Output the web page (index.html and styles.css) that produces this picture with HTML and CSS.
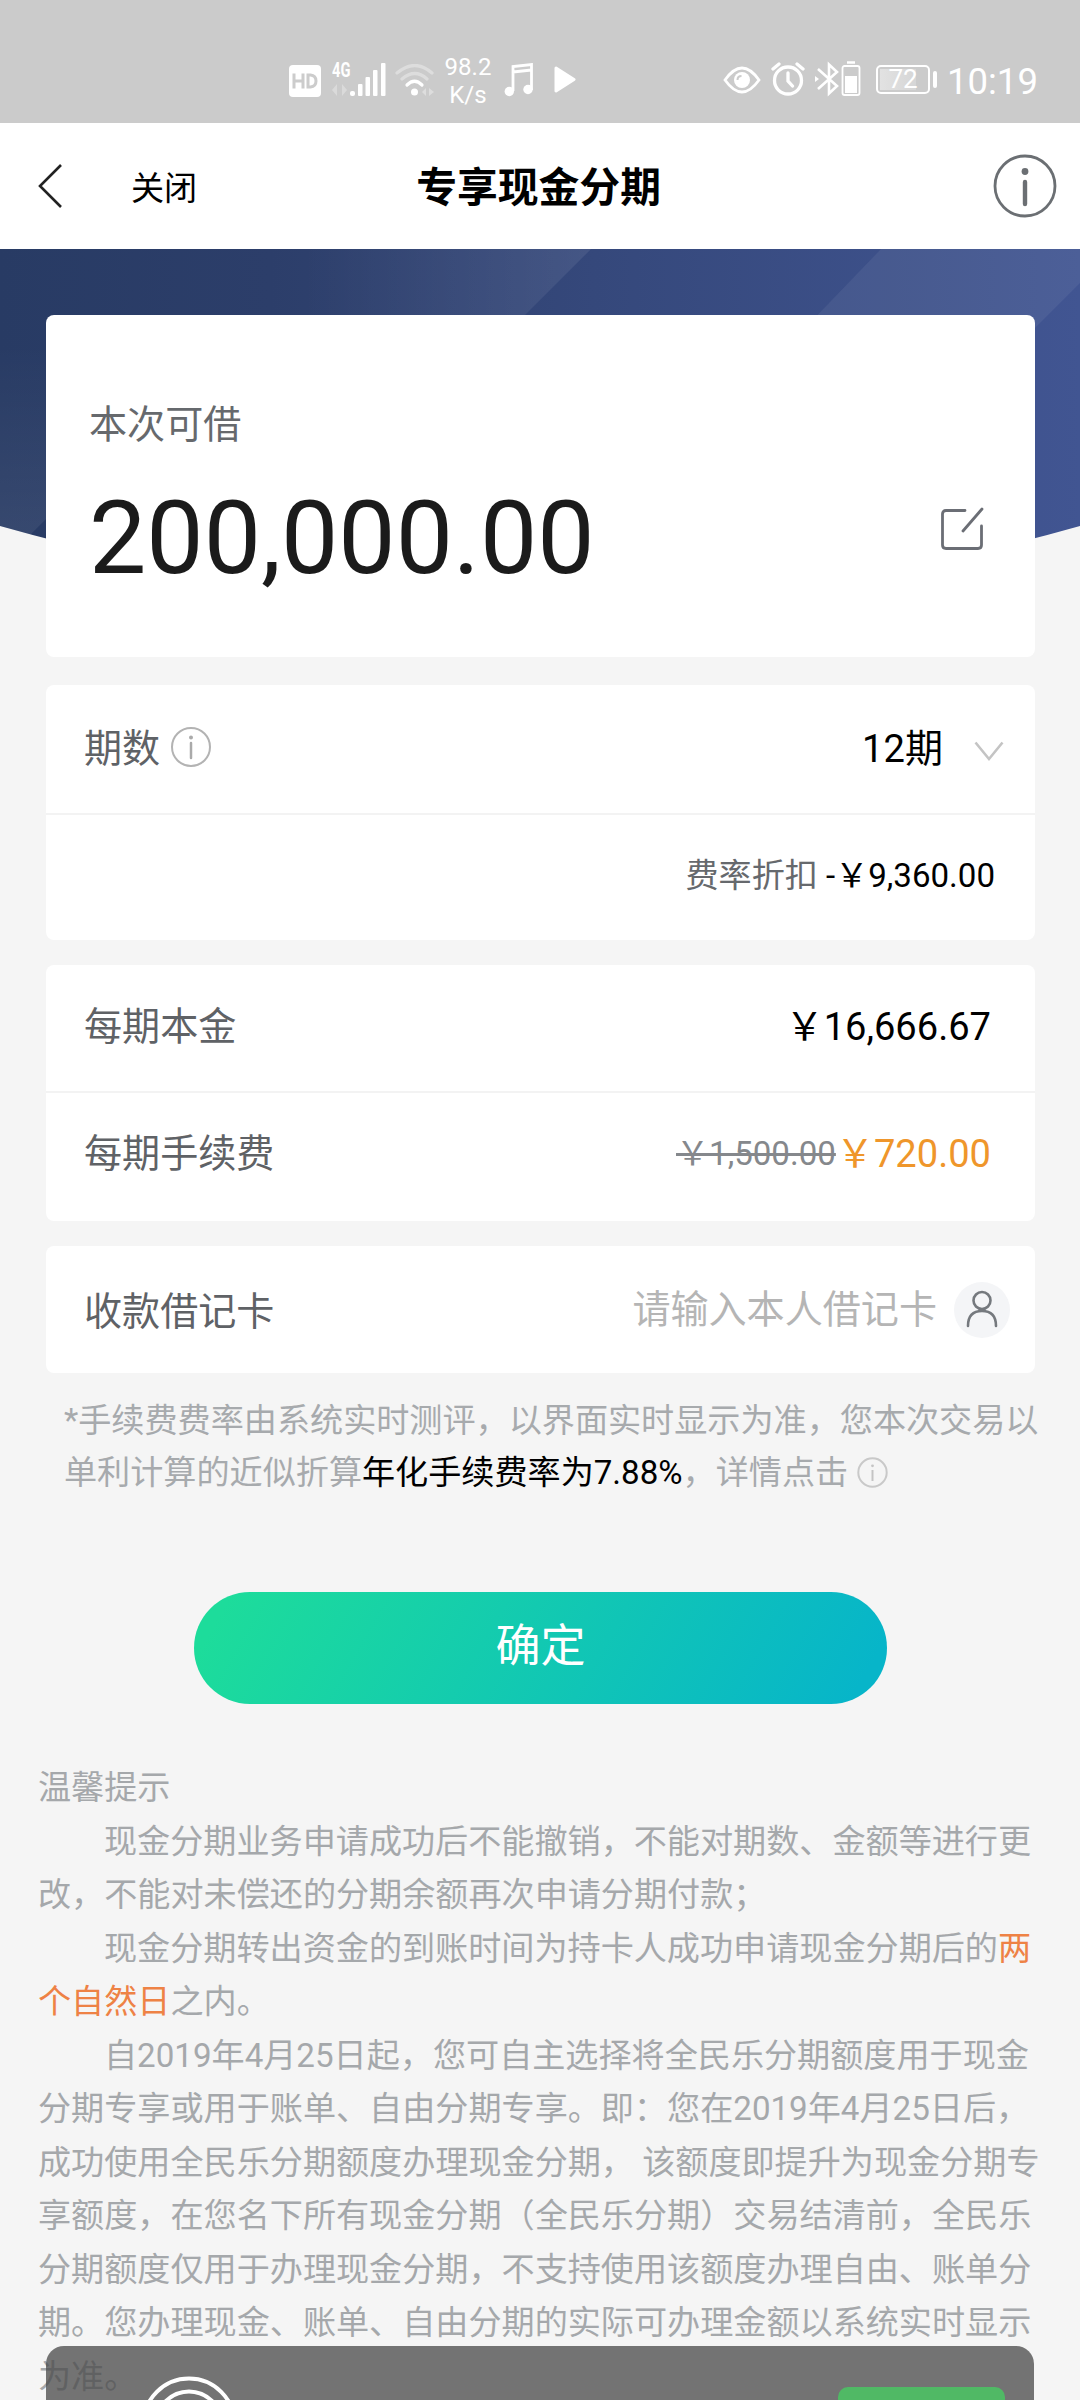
FILE: index.html
```html
<!DOCTYPE html>
<html lang="zh-CN">
<head>
<meta charset="utf-8">
<title>专享现金分期</title>
<link rel="stylesheet" href="styles.css">
</head>
<body>
<div class="screen">
  <header class="status">
    <svg class="ic-hd" width="32" height="32" viewBox="0 0 32 32"><rect width="32" height="32" rx="4" fill="#fff"/><path d="M5 8.500V23.500M14 8.500V23.500M5 16H14" stroke="#ccc" stroke-width="3" fill="none"/><path d="M19 10H21.500Q27 10.500 27 16T21.500 22H19Z" stroke="#ccc" stroke-width="3" fill="none"/></svg>
    <span class="net"><span class="g4">4G</span>
    <svg width="54" height="33" viewBox="0 0 54 33" fill="#fff"><path d="M0 27L5 21V33ZM10 21L15 27L10 33Z" opacity=".3"/><rect x="18" y="28" width="5" height="5" rx="2"/><rect x="26" y="21" width="4.500" height="12" rx="1"/><rect x="33.500" y="14" width="4.500" height="19" rx="1"/><rect x="41" y="7" width="4.500" height="26" rx="1"/><rect x="49" y="0" width="4.500" height="33" rx="1"/></svg></span>
    <svg class="ic-wifi" width="40" height="32" viewBox="0 0 40 32" fill="none" stroke="#fff" stroke-width="3.200" stroke-linecap="round"><path d="M2 9Q20-6 37 9M7 15Q20 4 32 15" opacity=".35"/><path d="M12 21Q19.500 13.500 27 21"/><circle cx="19.500" cy="28" r="3.500" fill="#fff" stroke="none"/><path d="M27 28L31 24V32ZM34 24L39 28L34 32Z" fill="#fff" stroke="none" opacity=".35"/></svg>
    <span class="speed">98.2<br>K/s</span>
    <svg class="ic-note" width="30" height="34" viewBox="0 0 30 34"><path d="M9 28V3.500L27.500 1.500V27M9 9L27.500 7" fill="none" stroke="#fff" stroke-width="2.800"/><circle cx="5.300" cy="28.500" r="4.700" fill="#fff"/><circle cx="24" cy="26.500" r="4.700" fill="#fff"/></svg>
    <svg class="ic-play" width="22" height="27" viewBox="0 0 22 27"><path d="M2 2L20 13.500L2 25Z" fill="#fff" stroke="#fff" stroke-width="3" stroke-linejoin="round"/></svg>
    <svg class="ic-eye" width="38" height="28" viewBox="0 0 38 28"><path d="M2 14Q19-10 36 14Q19 38 2 14Z" fill="none" stroke="#fff" stroke-width="2.800"/><circle cx="19" cy="14" r="8" fill="#fff"/><path d="M14.500 14Q14.500 10 18.500 10" fill="none" stroke="#ccc" stroke-width="2"/></svg>
    <svg class="ic-alarm" width="34" height="34" viewBox="0 0 34 34" fill="none" stroke="#fff" stroke-width="3.300" stroke-linecap="round"><circle cx="17" cy="18.500" r="13.500"/><path d="M17 11V19L21.500 24M2 7L8 2M32 7L26 2"/></svg>
    <svg class="ic-bt" width="46" height="36" viewBox="0 0 46 36" fill="none" stroke="#fff"><path d="M3 8L22 25L14 32.500V3.500L22 11L3 28" stroke-width="2.600"/><path d="M0 15L4 18L0 21Z" fill="#fff" stroke="none"/><rect x="27.500" y="5" width="17" height="29" rx="2" stroke-width="1.800"/><rect x="30" y="15" width="12" height="17" fill="#fff" stroke="none"/><path d="M32 1.500H40" stroke-width="2.500"/></svg>
    <span class="battery">72</span>
    <span class="time">10:19</span>
  </header>

  <nav class="nav">
    <svg class="back" width="26" height="46" viewBox="0 0 26 46"><path d="M24 2L3 23L24 44" fill="none" stroke="#222" stroke-width="2.600"/></svg>
    <span class="close">关闭</span>
    <h1 class="title">专享现金分期</h1>
    <svg class="info" width="64" height="64" viewBox="0 0 64 64"><circle cx="32" cy="32" r="30" fill="none" stroke="#6b6f73" stroke-width="2.800"/><circle cx="32" cy="17.500" r="3.400" fill="#6b6f73"/><path d="M32 28V50" stroke="#6b6f73" stroke-width="4.400" stroke-linecap="round"/></svg>
  </nav>

  <main class="content">
    <svg class="hero" width="1080" height="334" viewBox="0 0 1080 334">
      <defs>
        <linearGradient id="base" x1="0" y1="0" x2="1" y2="0"><stop offset="0" stop-color="#283b64"/><stop offset=".25" stop-color="#2c3e6a"/><stop offset=".55" stop-color="#35487b"/><stop offset="1" stop-color="#415592"/></linearGradient>
        <linearGradient id="sheen" gradientUnits="userSpaceOnUse" x1="300" y1="0" x2="591" y2="0"><stop offset="0" stop-color="#fff" stop-opacity="0"/><stop offset="1" stop-color="#fff" stop-opacity=".08"/></linearGradient>
        <linearGradient id="glow" x1="0" y1="0" x2="0" y2="1"><stop offset=".3" stop-color="#fff" stop-opacity="0"/><stop offset="1" stop-color="#fff" stop-opacity=".08"/></linearGradient>
        <clipPath id="bowl"><path d="M0 0H1080V277Q540 430 0 277Z"/></clipPath>
      </defs>
      <g clip-path="url(#bowl)"><rect width="1080" height="334" fill="url(#base)"/><path d="M300 0H591L277 314H300Z" fill="url(#sheen)"/><path d="M0 0H80V236L0 316Z" fill="url(#glow)"/><path d="M881 0H1080V34L780 334H560Z" fill="#fff" opacity=".06"/></g>
    </svg>

    <section class="card amount">
      <div class="amount-label">本次可借</div>
      <div class="amount-row"><span class="amount-value">200,000.00</span>
        <svg width="44" height="44" viewBox="0 0 44 44" fill="none" stroke="#6b6e75" stroke-width="2.800" stroke-linecap="round"><path d="M25 3.500H6Q2.500 3.500 2.500 7V38Q2.500 41.500 6 41.500H38Q41.500 41.500 41.500 38V19M23 24L42 2"/></svg>
      </div>
    </section>

    <section class="card">
      <div class="row term"><span class="label">期数</span>
        <svg class="mini" width="42" height="42" viewBox="0 0 42 42"><circle cx="21" cy="21" r="19" fill="none" stroke="#b3b3b3" stroke-width="2"/><circle cx="21" cy="11.500" r="2" fill="#aaa"/><path d="M21 17V32" stroke="#aaa" stroke-width="2.500" stroke-linecap="round"/></svg>
        <span class="value">12期</span>
        <svg class="chev" width="30" height="21" viewBox="0 0 30 21"><path d="M1.500 1.500L15 18L28.500 1.500" fill="none" stroke="#c4c4c4" stroke-width="2.600"/></svg>
      </div>
      <div class="row discount"><span class="small grey">费率折扣</span><span class="small">&nbsp;-￥9,360.00</span></div>
    </section>

    <section class="card">
      <div class="row principal"><span class="label">每期本金</span><span class="value">￥16,666.67</span></div>
      <div class="row fee"><span class="label">每期手续费</span><span class="value old">￥1,500.00</span><span class="now">￥720.00</span></div>
    </section>

    <section class="card">
      <div class="row debit"><span class="label">收款借记卡</span><span class="value placeholder">请输入本人借记卡</span>
        <svg class="person" width="56" height="56" viewBox="0 0 56 56"><circle cx="28" cy="28" r="28" fill="#f4f5f7"/><g fill="none" stroke="#75797e" stroke-width="2.600" stroke-linecap="round"><circle cx="28" cy="18.500" r="8.500"/><path d="M14 44Q14 29 28 29T42 44"/></g></svg>
      </div>
    </section>

    <p class="note">*手续费费率由系统实时测评，以界面实时显示为准，您本次交易以<br>单利计算的近似折算<b>年化手续费率为7.88%</b>，详情点击
      <svg width="31" height="31" viewBox="0 0 31 31"><circle cx="15.500" cy="15.500" r="14.200" fill="none" stroke="#c9c9c9" stroke-width="2"/><circle cx="15.500" cy="8.800" r="1.400" fill="#c4c4c4"/><path d="M15.500 13V24" stroke="#c4c4c4" stroke-width="2"/></svg></p>

    <button class="confirm" type="button">确定</button>

    <section class="tips">
      <p>温馨提示</p>
      <p class="in">现金分期业务申请成功后不能撤销，不能对期数、金额等进行更<br>改，不能对未偿还的分期余额再次申请分期付款；</p>
      <p class="in">现金分期转出资金的到账时间为持卡人成功申请现金分期后的<em>两<br>个自然日</em>之内。</p>
      <p class="in">自2019年4月25日起，您可自主选择将全民乐分期额度用于现金<br>分期专享或用于账单、自由分期专享。即：您在2019年4月25日后，<br>成功使用全民乐分期额度办理现金分期， 该额度即提升为现金分期专<br>享额度，在您名下所有现金分期（全民乐分期）交易结清前，全民乐<br>分期额度仅用于办理现金分期，不支持使用该额度办理自由、账单分<br>期。您办理现金、账单、自由分期的实际可办理金额以系统实时显示<br>为准。</p>
    </section>
  </main>

  <aside class="toast">
    <svg width="96" height="24" viewBox="0 0 96 24" fill="none" stroke="#fff" stroke-width="4"><circle cx="48" cy="48" r="45.500"/><circle cx="48" cy="48" r="32.500"/></svg>
    <span class="toast-action"></span>
  </aside>
</div>
</body>
</html>
```
FILE: styles.css
```css
* { box-sizing: border-box; }
body { margin: 0; }
p, h1 { margin: 0; }
svg { display: block; flex: none; }
.screen {
  position: relative;
  width: 1080px;
  height: 2400px;
  overflow: hidden;
  background: #f5f5f5;
  color: #000;
  font-family: Roboto, "Noto Sans CJK SC", sans-serif;
  font-weight: 400;
  white-space: nowrap;
}

/* status bar */
.status { display: flex; align-items: flex-start; height: 123px; background: #cbcbcb; color: #fff; }
.ic-hd { margin: 65px 0 0 289px; }
.net { display: flex; flex-direction: column; width: 54px; margin: 63px 0 0 11px; }
.g4 { height: 0; font-size: 21px; line-height: 15px; font-weight: 700; transform: scaleX(.7); transform-origin: left; }
.ic-wifi { margin: 64px 0 0 9px; }
.speed { width: 50px; margin: 53px 0 0 8px; font-size: 24px; line-height: 28px; text-align: center; }
.ic-note { margin: 63px 0 0 11px; }
.ic-play { margin: 66px 0 0 20px; }
.ic-eye { margin: 66px 0 0 147px; }
.ic-alarm { margin: 62px 0 0 10px; }
.ic-bt { margin: 61px 0 0 10px; }
.battery {
  position: relative;
  width: 54px; height: 29px;
  margin: 65px 0 0 15px;
  border: 2px solid #fff; border-radius: 5px;
  background: linear-gradient(90deg, #e2e2e2, #d6d6d6) 2px 2px / 36px 21px no-repeat;
  font-size: 26px; line-height: 25px; text-align: center;
}
.battery::after { content: ""; position: absolute; right: -9px; top: 4px; width: 4px; height: 17px; border-radius: 2px; background: #fff; }
.time { margin: 58px 0 0 17px; font-size: 36.500px; line-height: 48px; }

/* navigation */
.nav { display: flex; align-items: center; height: 126px; background: #fff; }
.back { margin-left: 37px; }
.close { margin-left: 68px; font-size: 33.100px; }
.title { width: 246px; margin: -3px 0 0 219px; font-size: 40.800px; font-weight: 700; }
.info { margin-left: 331px; }

/* page */
.content { position: relative; padding: 66px 45px 0 46px; }
.hero { position: absolute; left: 0; top: 0; }
.card { position: relative; margin-bottom: 25px; border-radius: 8px; background: #fff; }
.amount { height: 342px; margin-bottom: 28px; padding: 82px 51px 0 43px; }
.amount-label { font-size: 38.100px; line-height: 56px; color: #66696d; }
.amount-row { display: flex; justify-content: space-between; align-items: center; margin-top: 25px; height: 120px; }
.amount-row svg { margin-top: -19px; }
.amount-value { font-size: 102px; line-height: 120px; color: #1b1b1b; }
.row { display: flex; align-items: center; padding: 0 44px 0 38px; font-size: 38.100px; }
.row + .row { border-top: 2px solid #f3f3f3; }
.label { color: #5f6266; }
.value { margin-left: auto; }
.term { height: 128px; padding-right: 31px; }
.term span { margin-top: -8px; }
.mini { margin: -5px 0 0 10px; }
.chev { margin: 4px 0 0 31px; }
.discount { height: 127px; justify-content: flex-end; padding: 0 40px 9px 0; }
.small { font-size: 33.100px; }
.grey { color: #66696d; }
.principal { height: 126px; padding-bottom: 9px; }
.fee { height: 130px; padding-bottom: 13px; }
.old { font-size: 33.100px; color: #85888c; text-decoration: line-through; }
.now { color: #ef962b; }
.debit { height: 127px; padding-right: 25px; }
.debit .label { margin-top: -3px; }
.placeholder { margin-top: -6px; color: #b5b5b5; }
.person { margin-left: 17px; }
.note { margin: -3px 0 0 18px; font-size: 33.120px; line-height: 52px; color: #a7aaad; }
.note b { font-weight: 400; color: #000; }
.note svg { display: inline-block; margin-left: 1px; vertical-align: -4px; }
.confirm {
  display: block; width: 693px; height: 112px; margin: 93px 0 0 148px; padding: 0 0 12px;
  border: 0; border-radius: 56px;
  background: linear-gradient(120deg, #1ddc9b 5%, #07b5c9 95%);
  color: #fff; font: inherit; font-size: 45px;
}
.tips { margin: 57px 0 0 -8px; font-size: 33.120px; line-height: 53.500px; color: #a5a8ab; }
.in { text-indent: 66px; }
.tips em { font-style: normal; color: #ee8245; }

/* bottom overlay */
.toast {
  position: absolute; left: 46px; top: 2346px;
  display: flex; justify-content: space-between; align-items: flex-end;
  width: 988px; height: 54px; padding: 0 29px 0 95px;
  border-radius: 18px 18px 0 0;
  background: rgba(75, 75, 75, .77);
}
.toast-action { width: 167px; height: 13px; border-radius: 10px 10px 0 0; background: #50b965; }
```
